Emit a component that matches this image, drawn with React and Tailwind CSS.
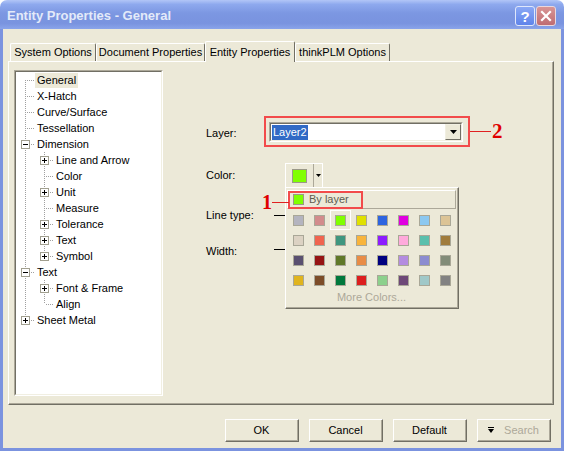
import React from 'react';

const tree = [
  { label: 'General', level: 0, first: true, sel: true },
  { label: 'X-Hatch', level: 0 },
  { label: 'Curve/Surface', level: 0 },
  { label: 'Tessellation', level: 0 },
  { label: 'Dimension', level: 0, box: '-' },
  { label: 'Line and Arrow', level: 1, box: '+' },
  { label: 'Color', level: 1 },
  { label: 'Unit', level: 1, box: '+' },
  { label: 'Measure', level: 1 },
  { label: 'Tolerance', level: 1, box: '+' },
  { label: 'Text', level: 1, box: '+' },
  { label: 'Symbol', level: 1, box: '+', last: true },
  { label: 'Text', level: 0, box: '-' },
  { label: 'Font & Frame', level: 1, box: '+' },
  { label: 'Align', level: 1, last: true },
  { label: 'Sheet Metal', level: 0, box: '+', last: true },
];

const swatches = [
  ['#b4b4bf', '#d28c8c', '#80ff00', '#e0e000', '#2e64e0', '#e000e0', '#8cc8f0', '#dcc496'],
  ['#dcd2c3', '#f0644f', '#3f967f', '#f8b43c', '#8c1cff', '#ffaadc', '#5abfac', '#a07c3c'],
  ['#5a5070', '#961414', '#607828', '#e88c46', '#000080', '#b48ce0', '#8c8cd0', '#828c78'],
  ['#e0b41e', '#7c4c28', '#00783c', '#dc1e1e', '#8cd08c', '#6e4878', '#a0c8c8', '#828282'],
];

const dot = { stroke: '#a0a0a0', strokeWidth: 1, strokeDasharray: '1 1', shapeRendering: 'crispEdges' };

// one 19x16 column of tree connectors
const Cell = ({ pipe, top, bottom, box }) => (
  <svg width="19" height="16" className="shrink-0">
    {pipe && <line x1="9.5" y1="0" x2="9.5" y2="16" {...dot} />}
    {top && <line x1="9.5" y1="0" x2="9.5" y2="8" {...dot} />}
    {bottom && <line x1="9.5" y1="8" x2="9.5" y2="16" {...dot} />}
    {!pipe && <line x1="11" y1="8.5" x2="19" y2="8.5" {...dot} />}
    {box && (
      <g shapeRendering="crispEdges">
        <rect x="5.5" y="4.5" width="8" height="8" fill="#fff" stroke="#a19f8f" />
        <line x1="7" y1="8.5" x2="12" y2="8.5" stroke="#000" />
        {box === '+' && <line x1="9.5" y1="6" x2="9.5" y2="11" stroke="#000" />}
      </g>
    )}
  </svg>
);

const Btn = ({ children, disabled }) => (
  <div className="w-[74px] h-[23px] border-t border-l border-white border-r border-b border-r-[#716f64] border-b-[#716f64]">
    <div className={`h-full flex items-center justify-center border-r border-b border-[#aca899] ${disabled ? 'text-[#aca899]' : 'text-black'}`}>
      {children}
    </div>
  </div>
);

export default function App() {
  return (
    <div className="w-[564px] h-[451px] flex flex-col bg-white font-['Liberation_Sans',Arial,sans-serif] text-[11px] text-black select-none">
      {/* title bar */}
      <div className="h-[29px] shrink-0 rounded-t-[7px] flex items-center pl-[7px] pr-[8px] pt-[3px] bg-[linear-gradient(to_bottom,#b2c6f7_0%,#8ea9ee_15%,#7c97e2_45%,#7993df_80%,#8aa4ea_100%)]">
        <div className="flex-1 text-[13px] font-bold text-[#e3eaf9]">Entity Properties - General</div>
        <div className="flex gap-[1px]">
          <div className="w-[20px] h-[20px] rounded-[3px] border border-[#dfe7fb] bg-[linear-gradient(to_bottom,#8aa8f5,#5f84ea)] flex items-center justify-center text-white font-bold text-[15px] leading-none">?</div>
          <div className="w-[20px] h-[20px] rounded-[3px] border border-[#ead7dc] bg-[linear-gradient(to_bottom,#d89595,#bf6c72)] flex items-center justify-center">
            <svg width="12" height="12" viewBox="0 0 12 12">
              <path d="M2 2 L10 10 M10 2 L2 10" stroke="#fff" strokeWidth="2.2" strokeLinecap="square" />
            </svg>
          </div>
        </div>
      </div>

      {/* dialog body */}
      <div className="flex-1 flex flex-col border-x-[3px] border-b-[3px] border-[#7b93df] bg-[#ece9d8] pt-[12px] pl-[5px] pr-[7px]">
        {/* tabs */}
        <div className="h-[20px] flex items-end ml-[2px] relative z-10">
          <div className="w-[86px] h-[18px] border-t border-l border-white border-r border-r-[#716f64] rounded-t-[2px] flex items-center justify-center">System Options</div>
          <div className="w-[109px] h-[18px] border-t border-l border-white border-r border-r-[#716f64] rounded-t-[2px] flex items-center justify-center">Document Properties</div>
          <div className="w-[90px] h-[21px] -mb-px bg-[#ece9d8] border-t border-l border-white border-r border-r-[#716f64] rounded-t-[2px] flex items-start pt-[2px] justify-center">Entity Properties</div>
          <div className="w-[95px] h-[18px] border-t border-l border-white border-r border-r-[#716f64] rounded-t-[2px] flex items-center justify-center">thinkPLM Options</div>
        </div>

        {/* panel */}
        <div className="h-[344px] border-t border-l border-white border-r border-b border-r-[#716f64] border-b-[#716f64]">
          <div className="h-full flex border-r border-b border-[#aca899] pt-[8px] pl-[5px]">
            {/* tree */}
            <div className="w-[149px] h-[326px] border-t border-l border-[#aca899] border-r border-b border-r-white border-b-white">
              <div className="h-full bg-white border-t border-l border-[#716f64] border-r border-b border-r-[#f1efe2] border-b-[#f1efe2]">
                {tree.map((it, i) => (
                  <div key={i} className="flex h-[16px] items-center">
                    {it.level === 1 && <Cell pipe />}
                    <Cell top={!it.first} bottom={!it.last} box={it.box} />
                    <span className={`px-[2px] leading-[15px] whitespace-nowrap ${it.sel ? 'bg-[#ece9d8]' : ''}`}>{it.label}</span>
                  </div>
                ))}
              </div>
            </div>

            {/* properties */}
            <div className="ml-[43px] pt-[46px] flex flex-col">
              <div className="flex items-center h-[31px]">
                <span className="w-[58px] mt-[3px]">Layer:</span>
                <div className="w-[206px] h-[31px] border-2 border-[#f24b4b] pl-[3px] pt-[4px]">
                  <div className="w-[194px] h-[20px] border-t border-l border-[#aca899] border-r border-b border-r-white border-b-white">
                    <div className="h-full flex items-center bg-white border-t border-l border-[#716f64] border-r border-b border-r-[#f1efe2] border-b-[#f1efe2] pl-[1px]">
                      <span className="bg-[#316ac5] text-white px-[1px] leading-[15px]">Layer2</span>
                      <div className="ml-auto w-[16px] h-full bg-[#ece9d8] border-t border-l border-[#f1efe2] border-r border-b border-r-[#716f64] border-b-[#716f64] flex items-center justify-center">
                        <svg width="7" height="4" viewBox="0 0 7 4"><path d="M0 0 H7 L3.5 4 Z" fill="#000" /></svg>
                      </div>
                    </div>
                  </div>
                </div>
                <div className="w-[21px] h-px bg-[#e02020]" />
                <span className="ml-[1px] font-['Liberation_Serif',serif] font-bold text-[21px] leading-none text-[#e00000]">2</span>
              </div>

              <div className="flex items-center h-[24px] mt-[16px]">
                <span className="w-[79px]">Color:</span>
                <div className="relative">
                  <div className="flex h-[24px] border-t border-l border-white">
                    <div className="w-[28px] flex items-center justify-center border-r border-[#aca899]">
                      <div className="w-[15px] h-[14px] bg-[#80ff00] border border-[#9a9888]" />
                    </div>
                    <div className="w-[9px] flex items-center justify-center border-r border-white">
                      <svg width="5" height="3" viewBox="0 0 5 3"><path d="M0 0 H5 L2.5 3 Z" fill="#000" /></svg>
                    </div>
                  </div>

                  {/* colour popup */}
                  <div className="absolute left-0 top-full z-20 w-[174px] h-[122px] bg-[#ece9d8] border-t border-l border-white border-r border-b border-r-[#716f64] border-b-[#716f64]">
                    <div className="relative h-full border-r border-b border-[#aca899] pt-[2px] pl-[1px] pr-[1px]">
                      <div className="relative h-[19px] flex items-center pl-[5px] gap-[5px] border-t border-l border-white border-r border-b border-r-[#aca899] border-b-[#aca899] text-[#5f5c50]">
                        <div className="w-[11px] h-[11px] bg-[#80ff00] border border-[#9a9888]" />
                        <span>By layer</span>
                        <div className="absolute left-0 top-0 w-[75px] h-[18px] border-2 border-[#f24b4b]" />
                      </div>
                      <div className="mt-[1px] pl-[1px] flex flex-col">
                        {swatches.map((row, r) => (
                          <div key={r} className="flex">
                            {row.map((c, k) => (
                              <div key={k} className={`w-[21px] h-[20px] flex items-center justify-center ${r === 0 && k === 2 ? 'border border-white' : ''}`}>
                                <div className="w-[11px] h-[11px] border border-[#a9a797]" style={{ background: c }} />
                              </div>
                            ))}
                          </div>
                        ))}
                      </div>
                      <div className="h-[15px] flex items-center justify-center text-[#aca899]">More Colors...</div>
                      <div className="absolute left-[-24px] top-[4px] flex items-center">
                        <span className="font-['Liberation_Serif',serif] font-bold text-[20px] leading-none text-[#e00000]">1</span>
                        <div className="w-[17px] h-px bg-[#e02020]" />
                      </div>
                    </div>
                  </div>
                </div>
              </div>

              <div className="flex items-center h-[14px] mt-[21px]">
                <span className="w-[68px]">Line type:</span>
                <div className="w-[11px] h-px bg-black" />
              </div>
              <div className="flex items-center h-[14px] mt-[22px]">
                <span className="w-[68px]">Width:</span>
                <div className="w-[11px] h-px bg-black -mt-[3px]" />
              </div>
            </div>
          </div>
        </div>

        {/* buttons */}
        <div className="mt-[14px] flex justify-end gap-[10px] pr-[3px]">
          <Btn>OK</Btn>
          <Btn>Cancel</Btn>
          <Btn>Default</Btn>
          <Btn disabled>
            <svg width="6" height="6" viewBox="0 0 6 6" className="mr-[10px]">
              <path d="M0 0.5 H6" stroke="#000" />
              <path d="M0 2 H6 L3 6 Z" fill="#000" />
            </svg>
            Search
          </Btn>
        </div>
      </div>
    </div>
  );
}
